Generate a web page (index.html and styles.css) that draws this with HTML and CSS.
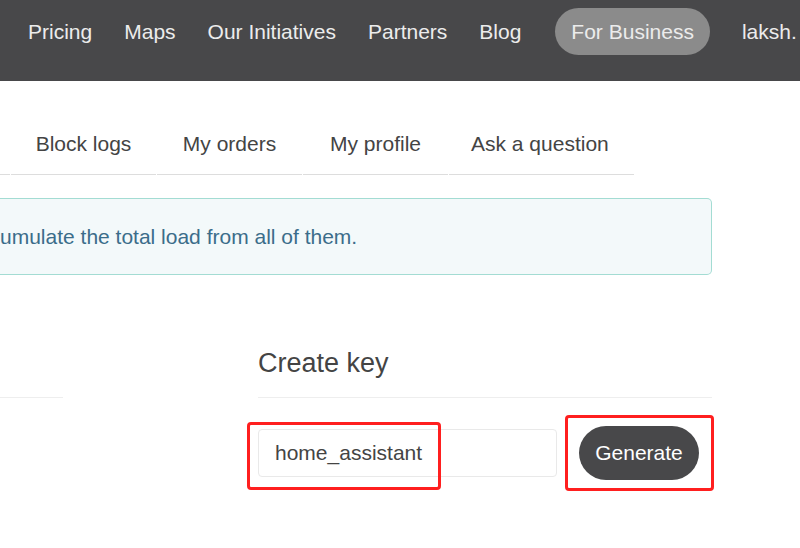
FILE: index.html
```html
<!DOCTYPE html>
<html lang="en">
<head>
    <meta charset="UTF-8">
    <meta name="viewport" content="width=device-width, initial-scale=1.0">
    <title>API keys</title>
    <link rel="stylesheet" href="styles.css">
</head>
<body>
    <header class="topbar">
        <nav class="main-nav">
            <a href="#">Pricing</a>
            <a href="#">Maps</a>
            <a href="#">Our Initiatives</a>
            <a href="#">Partners</a>
            <a href="#">Blog</a>
            <a href="#" class="pill">For Business</a>
            <a href="#" class="user">laksh.</a>
        </nav>
    </header>

    <main class="page">
        <ul class="tabs">
            <li class="cut"></li>
            <li>Block logs</li>
            <li>My orders</li>
            <li>My profile</li>
            <li class="wide">Ask a question</li>
        </ul>

        <div class="alert">umulate the total load from all of them.</div>

        <div class="keys-row">
            <section class="keys-list">
                <div class="keys-head"></div>
            </section>

            <section class="create-key">
                <h3>Create key</h3>
                <form class="key-form" onsubmit="return false;">
                    <input type="text" class="key-name" value="home_assistant">
                    <button type="submit" class="btn-generate">Generate</button>
                    <span class="mark mark-input"></span>
                    <span class="mark mark-button"></span>
                </form>
            </section>
        </div>
    </main>
</body>
</html>
```

FILE: styles.css
```css
body {
    margin: 0;
    font-family: "Liberation Sans", Arial, sans-serif;
    background: #fff;
    color: #444;
}
.page {
    padding-bottom: 60px;
}
.topbar {
    background-color: #48484a;
    height: 81px;
    box-sizing: border-box;
    padding-top: 8px;
    overflow: hidden;
}
.main-nav {
    display: flex;
    align-items: center;
    gap: 32px;
    height: 47px;
    padding-left: 28px;
    white-space: nowrap;
}
.main-nav a {
    color: #ececec;
    text-decoration: none;
    font-size: 21px;
}
.main-nav .pill {
    background-color: #8b8b8b;
    border-radius: 24px;
    height: 47px;
    line-height: 47px;
    padding: 0 16px;
    margin-left: 2px;
}

.tabs {
    list-style: none;
    margin: 33px 0 0 0;
    padding: 0;
    display: flex;
    width: 634px;
}
.tabs li {
    font-size: 21px;
    line-height: 60px;
    width: 145px;
    text-align: center;
    border-bottom: 1px solid #ddd;
    margin-right: 1px;
    color: #444;
}
.tabs li.cut {
    width: 10px;
}
.tabs li.wide {
    flex: 1;
    margin-right: 0;
    text-align: left;
    padding-left: 22px;
    box-sizing: border-box;
}

.alert {
    margin-top: 23px;
    width: 712px;
    box-sizing: border-box;
    background-color: #f3f9fa;
    border: 1px solid #a3dcd3;
    border-left: none;
    border-radius: 0 5px 5px 0;
    padding: 26px 0;
    line-height: 23px;
    font-size: 21px;
    color: #3b6d8a;
}

.keys-row {
    display: flex;
    align-items: flex-start;
    gap: 195px;
}
.keys-list {
    width: 63px;
}
.keys-head {
    margin-top: 74px;
    height: 48px;
    border-bottom: 1px solid #eee;
}
.create-key {
    width: 454px;
}
.create-key h3 {
    margin: 74px 0 0 0;
    font-size: 27px;
    font-weight: normal;
    line-height: 29px;
    padding-bottom: 19px;
    border-bottom: 1px solid #eee;
    color: #444;
}

.key-form {
    position: relative;
    display: flex;
    align-items: center;
    gap: 22px;
    margin-top: 28px;
}
.key-name {
    width: 299px;
    height: 48px;
    box-sizing: border-box;
    border: 1px solid #e9e9e9;
    border-radius: 4px;
    padding: 0 16px;
    font-family: inherit;
    font-size: 21px;
    color: #444;
    outline: none;
}
.btn-generate {
    width: 120px;
    height: 54px;
    border: none;
    border-radius: 27px;
    background-color: #48484a;
    color: #fff;
    font-family: inherit;
    font-size: 21px;
    cursor: pointer;
}

/* annotation boxes drawn over the form */
.mark {
    position: absolute;
    border: 3px solid #ff1f1f;
    border-radius: 4px;
    box-sizing: border-box;
}
.mark-input {
    left: -11px;
    top: -4px;
    width: 194px;
    height: 68px;
}
.mark-button {
    left: 307px;
    top: -11px;
    width: 149px;
    height: 76px;
}
```
